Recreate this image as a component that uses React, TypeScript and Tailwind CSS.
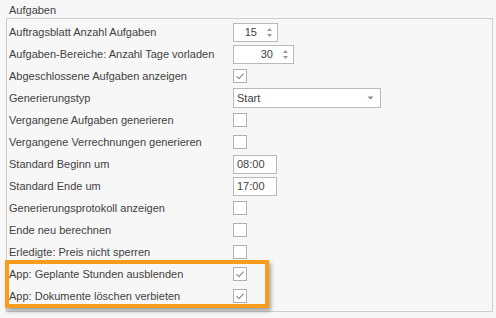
const Spin = ({ value, w }: { value: string; w: string }) => (
  <div className={`flex items-center h-[19px] ${w} border border-[#b9b9b9] bg-white`}>
    <span className="flex-1 text-right pr-[9px]">{value}</span>
    <svg width="7" height="13" viewBox="0 0 7 13" className="mr-[4px]">
      <path d="M1 5 L3.5 2 L6 5 Z" fill="#9a9a9a" />
      <path d="M1 8 L3.5 11 L6 8 Z" fill="#9a9a9a" />
    </svg>
  </div>
);

const Check = ({ checked }: { checked?: boolean }) => (
  <div className="w-[14px] h-[14px] border border-[#b0b0b0] bg-white flex items-center justify-center">
    {checked && (
      <svg width="10" height="10" viewBox="0 0 10 10">
        <path d="M1.5 5.2 L4 7.6 L8.6 2.6" stroke="#8c8c8c" strokeWidth="1.1" fill="none" />
      </svg>
    )}
  </div>
);

const TimeEdit = ({ value }: { value: string }) => (
  <div className="h-[19px] w-[44px] border border-[#b9b9b9] bg-white flex items-center pl-[3px]">
    {value}
  </div>
);

const Combo = ({ value }: { value: string }) => (
  <div className="h-[20px] w-[148px] border border-[#b9b9b9] bg-white flex items-center pl-[3px] pr-[6px]">
    <span className="flex-1">{value}</span>
    <svg width="7" height="4" viewBox="0 0 7 4">
      <path d="M0.5 0.5 L3.5 3.5 L6.5 0.5 Z" fill="#8a8a8a" />
    </svg>
  </div>
);

const rows: { label: string; control: React.ReactNode }[] = [
  { label: "Auftragsblatt Anzahl Aufgaben", control: <Spin value="15" w="w-[45px]" /> },
  { label: "Aufgaben-Bereiche: Anzahl Tage vorladen", control: <Spin value="30" w="w-[61px]" /> },
  { label: "Abgeschlossene Aufgaben anzeigen", control: <Check checked /> },
  { label: "Generierungstyp", control: <Combo value="Start" /> },
  { label: "Vergangene Aufgaben generieren", control: <Check /> },
  { label: "Vergangene Verrechnungen generieren", control: <Check /> },
  { label: "Standard Beginn um", control: <TimeEdit value="08:00" /> },
  { label: "Standard Ende um", control: <TimeEdit value="17:00" /> },
  { label: "Generierungsprotokoll anzeigen", control: <Check /> },
  { label: "Ende neu berechnen", control: <Check /> },
  { label: "Erledigte: Preis nicht sperren", control: <Check /> },
  { label: "App: Geplante Stunden ausblenden", control: <Check checked /> },
  { label: "App: Dokumente löschen verbieten", control: <Check checked /> },
];

export default function App() {
  return (
    <div
      className="relative w-[496px] h-[318px] bg-[#f7f7f7] text-[#3f3f3f] text-[11px] overflow-hidden"
      style={{ fontFamily: '"Liberation Sans", Arial, sans-serif' }}
    >
      <div className="pl-[9px] pt-[4px] h-[18px] leading-[13px]">Aufgaben</div>
      <div className="ml-[6px] w-[487px] h-[294px] border border-[#cdcdcd] pt-[2px]">
        {rows.map((r) => (
          <div key={r.label} className="flex items-center h-[22px]">
            <div className="w-[226px] pl-[2px]">{r.label}</div>
            {r.control}
          </div>
        ))}
      </div>
      {/* highlight */}
      <div className="absolute left-[5px] top-[260px] w-[264px] h-[48px] border-[4px] border-[#f99c1b] shadow-[2px_3px_4px_rgba(0,0,0,0.35)]" />
    </div>
  );
}
